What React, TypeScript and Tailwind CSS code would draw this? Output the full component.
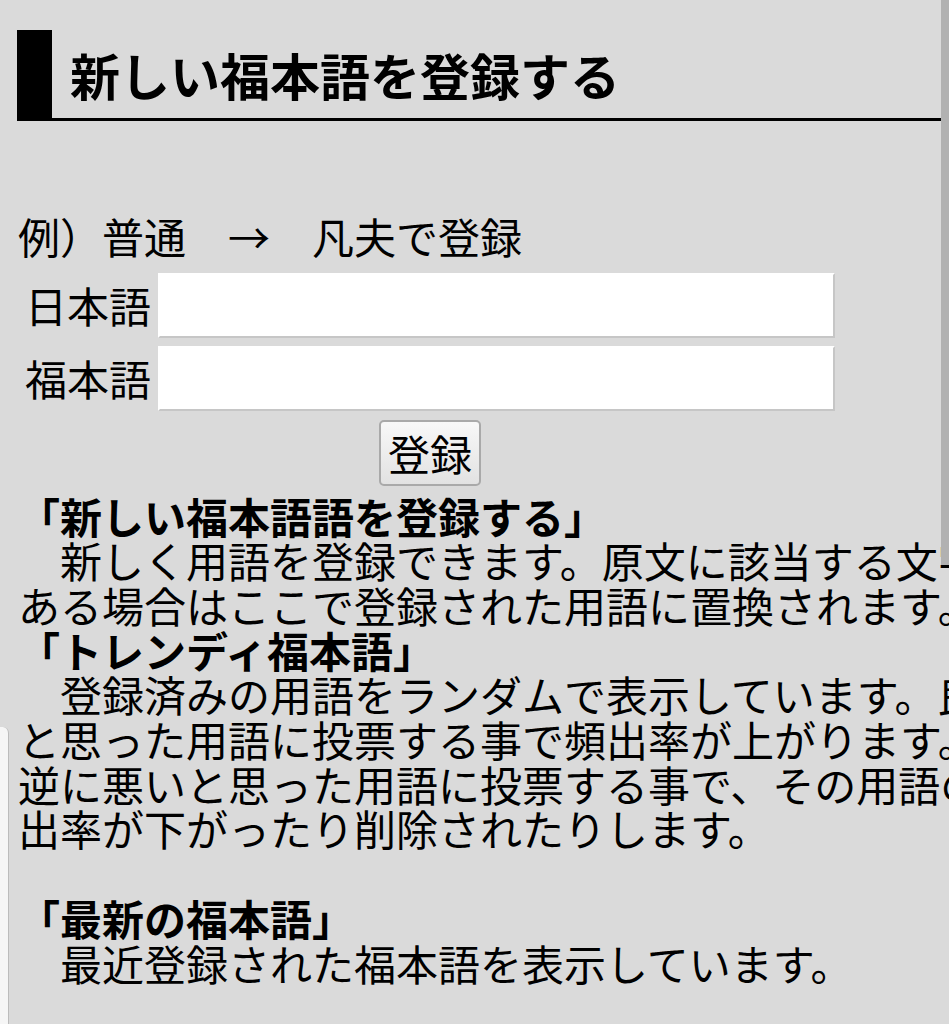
const FONT = "font-['Noto_Sans_CJK_JP','Noto_Sans_CJK_SC',sans-serif]";

const FIELDS = ['日本語', '福本語'];
const IND = '\u3000';

function Field({ label }: { label: string }) {
  return (
    <div className="flex items-center gap-[7px]">
      <span className="w-[126px] text-[42px] leading-none">{label}</span>
      <input
        type="text"
        className="h-[65px] w-[677px] border-2 border-t-white border-l-white border-r-[#c6c6c6] border-b-[#c6c6c6] bg-white outline-none"
      />
    </div>
  );
}

export default function App() {
  return (
    <div className={`relative h-[1024px] w-[949px] overflow-hidden bg-[#dadada] text-black ${FONT}`}>
      <div className="w-[1060px] pl-[17px] pt-[30px]">
        {/* Title */}
        <h1 className="flex h-[91px] items-center border-b-[3px] border-l-[35px] border-black pl-[18px] text-[50px] font-bold leading-none">
          新しい福本語を登録する
        </h1>
      </div>

      <div className="w-[1060px] pl-[18px]">
        <p className="mt-[93px] text-[42px] leading-[44.5px]">例）普通　→　凡夫で登録</p>

        {/* Form */}
        <div className="ml-[7px] mt-[14px] flex w-[810px] flex-col gap-[8px]">
          {FIELDS.map((f) => (
            <Field key={f} label={f} />
          ))}
          <div className="mt-[1px] flex justify-center">
            <button className="h-[66px] w-[102px] rounded-[5px] border-2 border-[#a9a9a9] bg-gradient-to-b from-[#f8f8f8] to-[#e2e2e2] text-[42px] leading-none">
              登録
            </button>
          </div>
        </div>

        {/* Help text */}
        <div className="mt-[8px] whitespace-nowrap text-[42px] leading-[44.7px]">
          <p className="font-bold">「新しい福本語語を登録する」</p>
          <p>
            {IND}新しく用語を登録できます。原文に該当する文字が
            <br />
            ある場合はここで登録された用語に置換されます。
          </p>
          <p className="font-bold">「トレンディ福本語」</p>
          <p>
            {IND}登録済みの用語をランダムで表示しています。良い
            <br />
            と思った用語に投票する事で頻出率が上がります。
            <br />
            逆に悪いと思った用語に投票する事で、その用語の頻
            <br />
            出率が下がったり削除されたりします。
          </p>
          <p className="mt-[44.7px] font-bold">「最新の福本語」</p>
          <p>{IND}最近登録された福本語を表示しています。</p>
        </div>
      </div>

      {/* scrollbar */}
      <div className="absolute right-0 top-0 h-[565px] w-[8px] bg-[#b1b1b1]" />
      {/* edge panel */}
      <div className="absolute bottom-0 left-0 top-[727px] w-[9px] rounded-tr-[6px] border-r border-[#bcbcbc] bg-[#f6f6f6]" />
    </div>
  );
}
